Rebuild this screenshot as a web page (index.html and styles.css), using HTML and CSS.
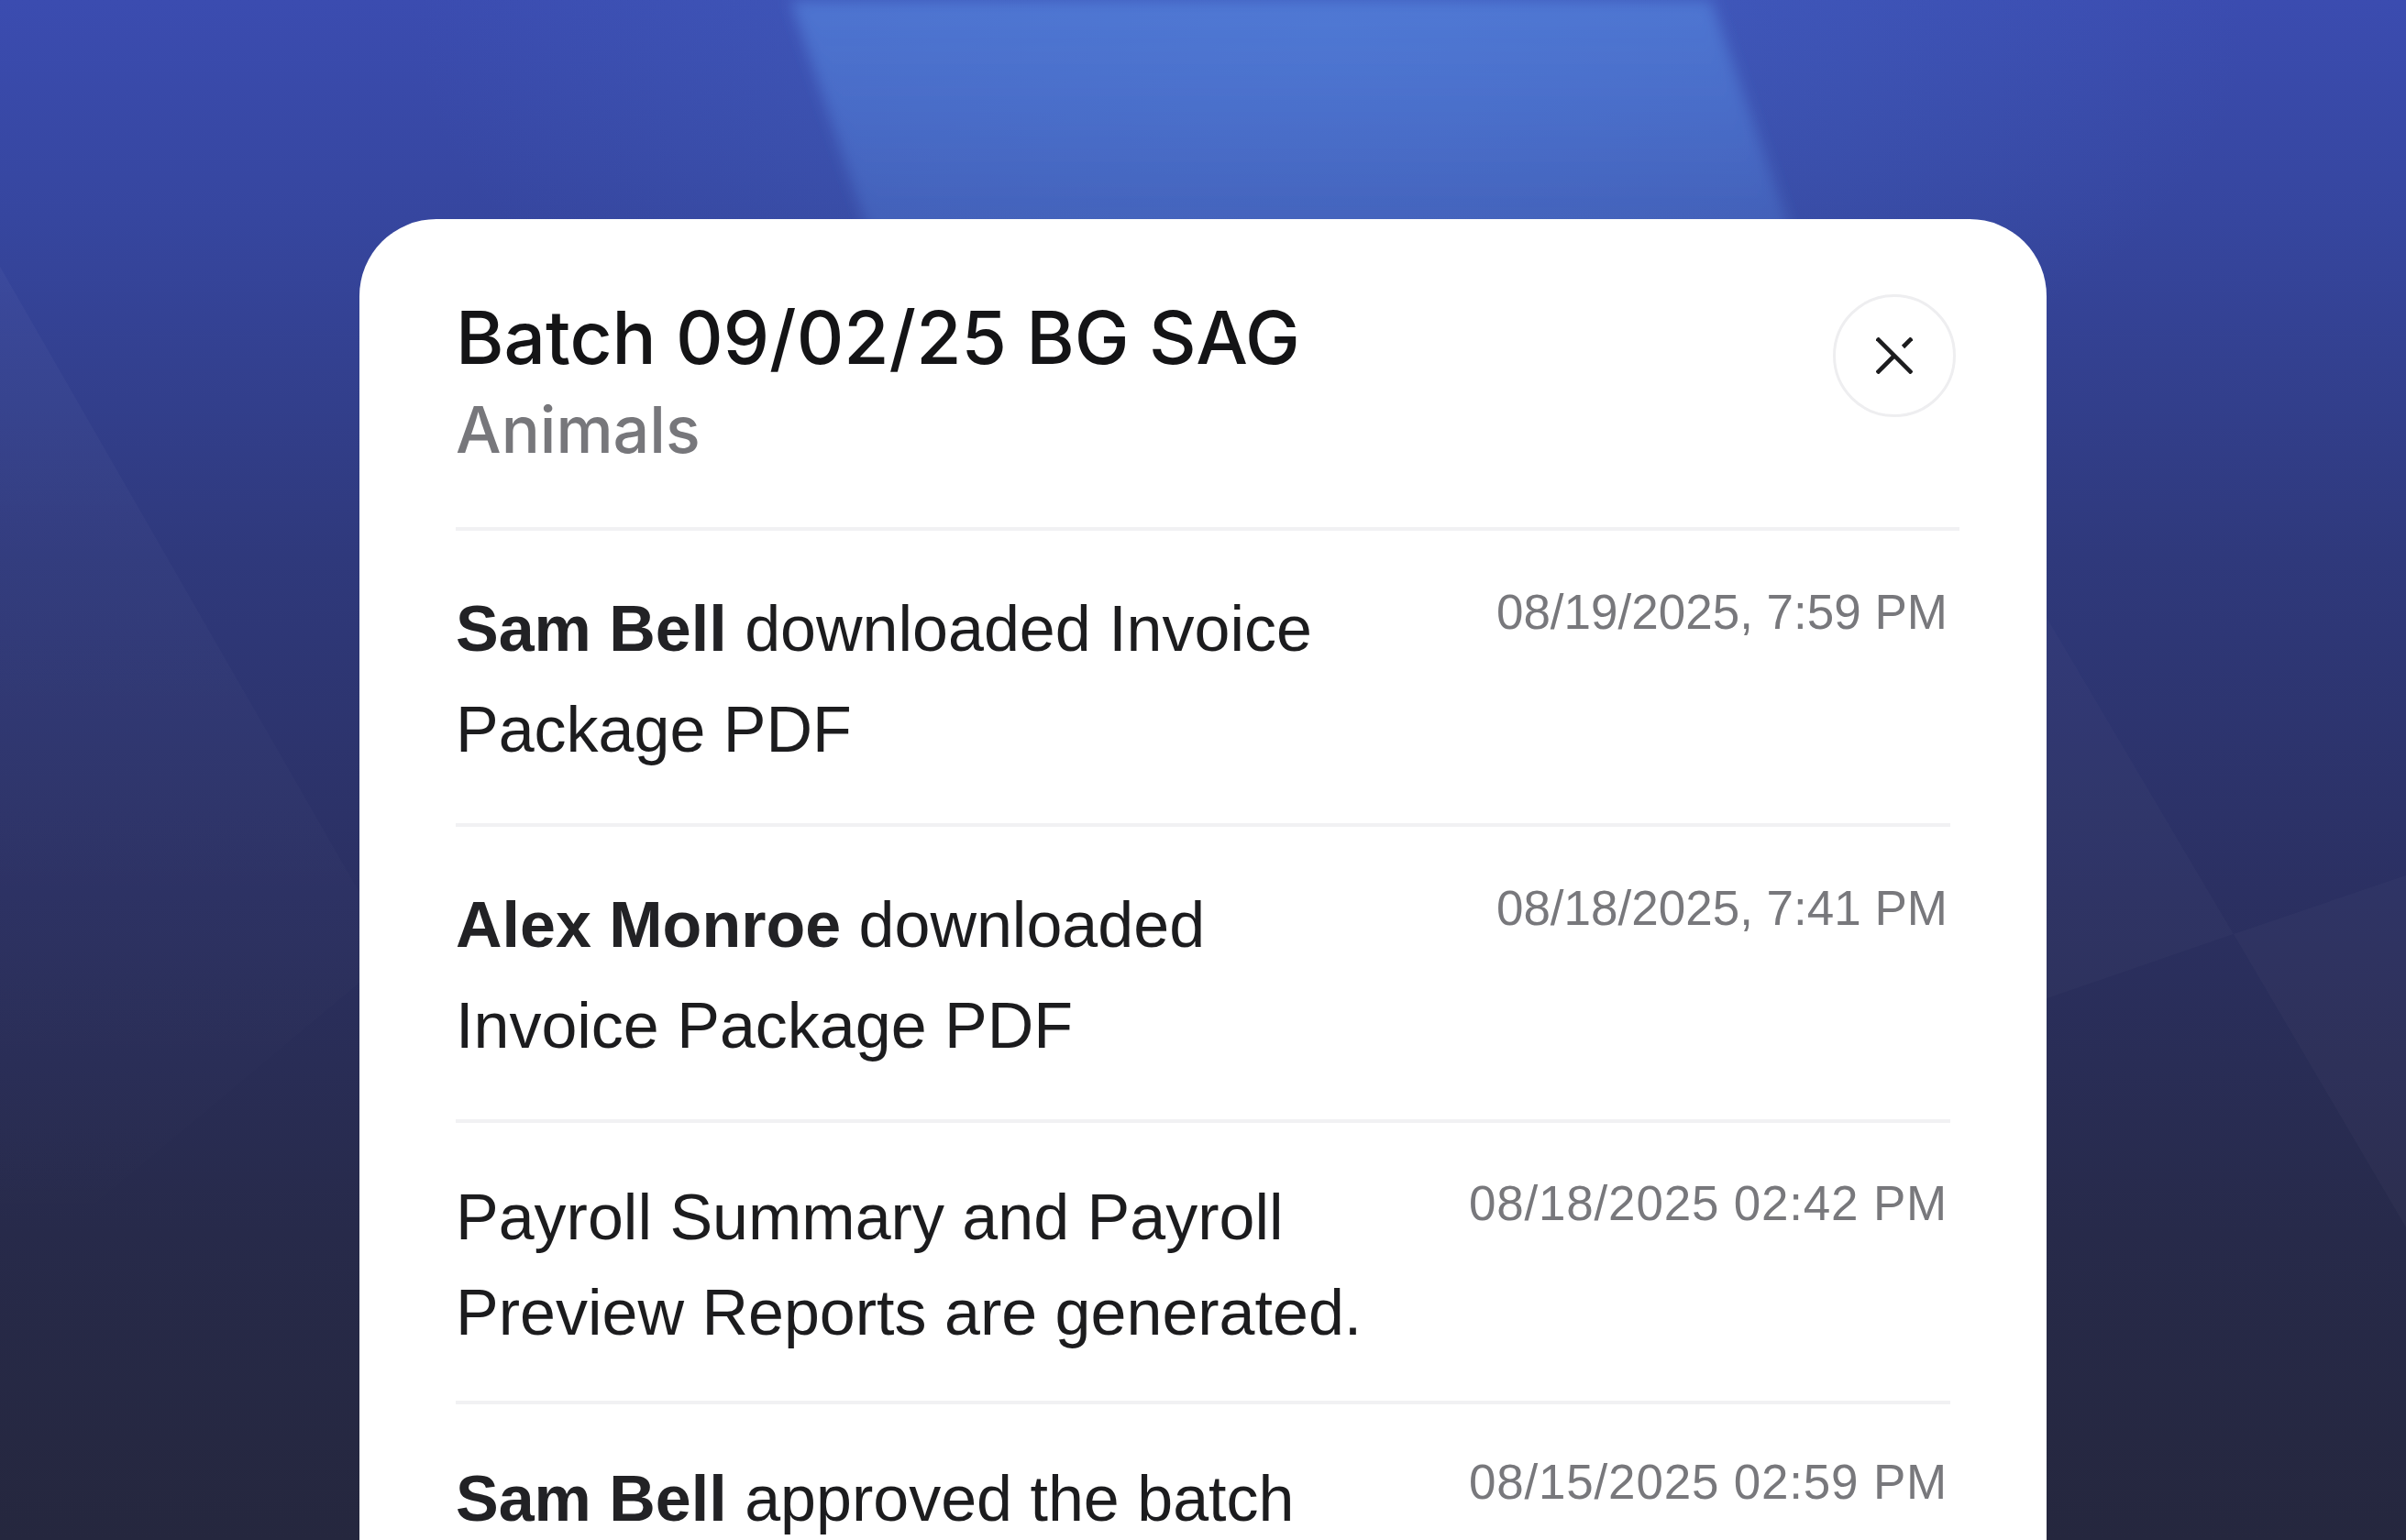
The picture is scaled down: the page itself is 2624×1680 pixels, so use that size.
FILE: index.html
```html
<!DOCTYPE html>
<html lang="en">
<head>
<meta charset="utf-8">
<title>Batch 09/02/25 BG SAG</title>
<link rel="stylesheet" href="styles.css">
</head>
<body>
<div class="stage">
  <svg class="backdrop" viewBox="0 0 2624 1680" preserveAspectRatio="none" aria-hidden="true">
    <defs>
      <linearGradient id="streak" x1="0" y1="0" x2="0" y2="1">
        <stop offset="0" stop-color="#5a8fe6" stop-opacity="0.55"/>
        <stop offset="0.5" stop-color="#5a8fe6" stop-opacity="0.25"/>
        <stop offset="1" stop-color="#5a8fe6" stop-opacity="0"/>
      </linearGradient>
      <linearGradient id="sheenL" x1="0" y1="0" x2="0" y2="1">
        <stop offset="0" stop-color="#ffffff" stop-opacity="0.03"/>
        <stop offset="1" stop-color="#ffffff" stop-opacity="0"/>
      </linearGradient>
      <filter id="soft" x="-10%" y="-10%" width="120%" height="120%">
        <feGaussianBlur stdDeviation="8"/>
      </filter>
    </defs>
    <polygon points="862,0 1866,0 2060,560 1050,560" fill="url(#streak)" filter="url(#soft)"/>
    <polygon points="0,291 430,1040 0,1400" fill="url(#sheenL)"/>
    <polygon points="2100,450 2436,1019 2100,1135" fill="#ffffff" fill-opacity="0.02"/>
    <polygon points="2436,1019 2624,955 2624,1339" fill="#ffffff" fill-opacity="0.025"/>
  </svg>

  <section class="card">
    <header class="card-head">
      <div class="head-text">
        <h1 class="title">Batch 09/02/25 BG SAG</h1>
        <p class="subtitle">Animals</p>
      </div>
      <button class="close" type="button" aria-label="Close">
        <svg viewBox="0 0 40 40" width="40" height="40">
          <path d="M1 1 L39 39" />
          <path d="M1 39 L20.5 19.5" />
          <path d="M29.5 10.5 L39 1" />
        </svg>
      </button>
    </header>

    <ul class="log">
      <li class="row">
        <p class="msg"><b>Sam Bell</b> downloaded Invoice Package PDF</p>
        <span class="ts">08/19/2025, 7:59 PM</span>
      </li>
      <li class="row">
        <p class="msg"><b>Alex Monroe</b> downloaded Invoice Package PDF</p>
        <span class="ts">08/18/2025, 7:41 PM</span>
      </li>
      <li class="row row-system">
        <p class="msg">Payroll Summary and Payroll Preview Reports are generated.</p>
        <span class="ts ts-wide">08/18/2025 02:42 PM</span>
      </li>
      <li class="row row-last">
        <p class="msg"><b>Sam Bell</b> approved the batch</p>
        <span class="ts ts-wide">08/15/2025 02:59 PM</span>
      </li>
    </ul>
  </section>
</div>
</body>
</html>
```

FILE: styles.css
```css
html, body {
  margin: 0;
  padding: 0;
}

body {
  width: 2624px;
  height: 1680px;
  overflow: hidden;
  font-family: "Liberation Sans", Arial, sans-serif;
}

.stage {
  position: relative;
  width: 2624px;
  height: 1680px;
  overflow: hidden;
  box-sizing: border-box;
  padding: 239px 0 0 392px;
  background:
    radial-gradient(ellipse 1000px 480px at 1450px 40px, rgba(78, 128, 222, 0.35), rgba(78, 128, 222, 0) 100%),
    linear-gradient(180deg, #3b4cb0 0%, #36469f 14%, #2f397c 36%, #2b3062 58%, #272a4a 80%, #25273e 100%);
}

.backdrop {
  position: absolute;
  left: 0;
  top: 0;
  width: 2624px;
  height: 1680px;
  z-index: 0;
}

.card {
  position: relative;
  z-index: 1;
  width: 1840px;
  min-height: 1600px;
  box-sizing: border-box;
  padding: 81px 105px 0 105px;
  background: #ffffff;
  border-radius: 84px 84px 0 0;
}

.card-head {
  display: flex;
  justify-content: space-between;
  align-items: flex-start;
  margin-right: -10px;
  padding-right: 10px;
  padding-bottom: 54px;
  border-bottom: 4px solid #f1f1f3;
}

.head-text {
  display: flex;
  flex-direction: column;
}

.title {
  margin: 0;
  font-family: "Inter", "Lato", sans-serif;
  font-weight: 500;
  font-size: 80px;
  line-height: 96px;
  color: #141416;
  letter-spacing: 0;
}

.subtitle {
  margin: 0;
  font-family: "Inter", "Lato", sans-serif;
  font-weight: 500;
  font-size: 70px;
  line-height: 105px;
  color: #77777b;
}

.close {
  flex: none;
  width: 134px;
  height: 134px;
  margin: 1px -6px 0 0;
  padding: 0;
  border: 3px solid #eeeef0;
  border-radius: 50%;
  background: #ffffff;
  display: flex;
  align-items: center;
  justify-content: center;
}

.close svg {
  display: block;
  fill: none;
  stroke: #1c1c1e;
  stroke-width: 4.6;
}

.log {
  list-style: none;
  margin: 0;
  padding: 0;
}

.row {
  display: flex;
  justify-content: space-between;
  align-items: flex-start;
  padding: 52px 0 47px;
  border-bottom: 4px solid #f1f1f3;
}

.row-system {
  padding: 51px 0 44px;
}

.row-system .msg {
  line-height: 104px;
}

.row-last {
  padding-top: 48px;
  border-bottom: none;
}

.msg {
  margin: 0;
  max-width: 1040px;
  font-size: 70px;
  line-height: 110px;
  color: #1c1c1e;
}

.msg b {
  font-weight: 700;
  color: #222225;
}

.ts {
  flex: none;
  white-space: nowrap;
  font-size: 53px;
  line-height: 74px;
  color: #78787c;
  margin-right: 3px;
}

.ts-wide {
  letter-spacing: 0.8px;
}
```
